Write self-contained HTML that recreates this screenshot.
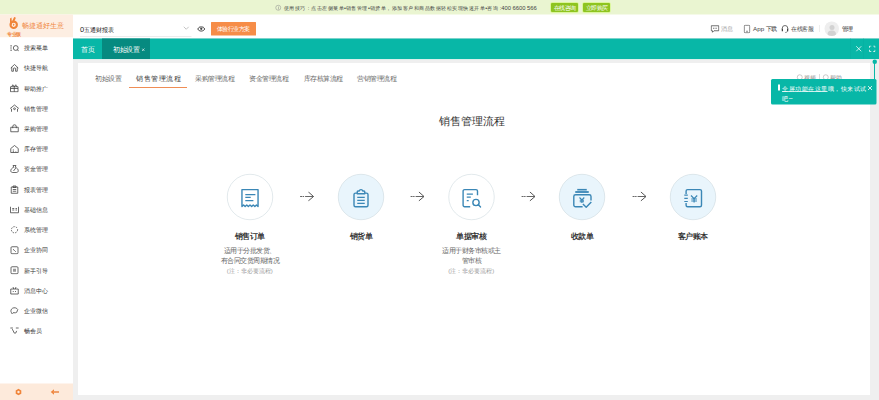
<!DOCTYPE html>
<html><head><meta charset="utf-8">
<style>
html,body{margin:0;padding:0;width:879px;height:400px;overflow:hidden;background:#efefef;}
*{box-sizing:border-box;}
#root{position:absolute;left:0;top:0;width:1758px;height:800px;transform:scale(0.5);transform-origin:0 0;font-family:"Liberation Sans",sans-serif;color:#333;overflow:hidden;}
.a{position:absolute;white-space:nowrap;}
.z{font-size:1.333em;letter-spacing:0em;-webkit-text-stroke:0.025em currentColor;}
u .z, .z u{text-decoration:underline;}
.p{color:transparent;-webkit-text-stroke:0;}
.cjk .z{font-size:1em;letter-spacing:0;-webkit-text-stroke:0;}
.cjk .p{color:inherit;}
</style></head>
<body>
<div id="root">
<div class="a" style="left:0.0px;top:0.0px;width:1758.0px;height:800.0px;background:#efefef;"></div>
<div class="a" style="left:0.0px;top:0.0px;width:1758.0px;height:29.5px;background:#eaf5d1;"></div>
<div class="a" style="left:551px;top:9.5px;width:11px;height:11px;border:1.2px solid #888;border-radius:50%;"></div>
<div class="a" style="left:556.0px;top:14.0px;width:1.2px;height:4.5px;background:#888;"></div>
<div class="a" style="left:556.0px;top:11.8px;width:1.2px;height:1.2px;background:#888;"></div>
<div class="a" style="left:567.0px;top:7.4px;font-size:10.7px;line-height:17.12px;color:#444;"><span class="z">使用技巧</span><span class="z p">：</span><span class="z">点击左侧菜单</span>•<span class="z">销售管理</span>•<span class="z">销货单</span><span class="z p">，</span><span class="z">添加客户和商品数据轻松实现快速开单</span>•<span class="z">咨询</span><span class="z p">：</span><span style="font-size:11.7px;margin-left:-5px;">400 6600 566</span></div>
<div class="a" style="left:1102.0px;top:6.0px;width:54.0px;height:18.0px;background:#8ec420;border-radius:2px;box-shadow:0 0 0 1.5px #d6f68c;"></div>
<div class="a" style="left:1102.0px;width:54px;text-align:center;top:7.2px;font-size:11px;line-height:17.6px;color:#fff;"><span class="z">在线咨询</span></div>
<div class="a" style="left:1166.0px;top:6.0px;width:54.0px;height:18.0px;background:#8ec420;border-radius:2px;box-shadow:0 0 0 1.5px #d6f68c;"></div>
<div class="a" style="left:1166.0px;width:54px;text-align:center;top:7.2px;font-size:11px;line-height:17.6px;color:#fff;"><span class="z">立即购买</span></div>
<div class="a" style="left:0.0px;top:29.0px;width:1758.0px;height:47.0px;background:#fff;"></div>
<div class="a" style="left:0.0px;top:29.0px;width:146.0px;height:46.0px;background:#fdeee2;"></div>
<svg class="a" style="left:18.0px;top:33.0px;" width="20" height="26" viewBox="0 0 20 26"><path d="M2 4 L5 2 L6.2 16 L2 17 Z" fill="#f0853a"/><path d="M8.5 9.5 L11.5 3" stroke="#f0853a" stroke-width="3.8" stroke-linecap="round"/><circle cx="9.4" cy="16.6" r="6.4" fill="none" stroke="#f0853a" stroke-width="4.2"/><path d="M8 14 L11.5 16.6 L8 19.2Z" fill="#f0853a"/></svg>
<div class="a" style="left:44.0px;top:40.0px;font-size:14px;line-height:22.4px;color:#f0853a;"><span class="z">畅捷通好生意</span></div>
<div class="a" style="left:14.8px;top:61.2px;font-size:9px;line-height:14.4px;color:#f0853a;font-weight:bold;"><span class="z">专业版</span></div>
<div class="a" style="left:160.0px;top:50.0px;font-size:11.5px;line-height:18.4px;color:#222;"><span style="font-size:15px">0</span><span class="z">五通财报表</span></div>
<div class="a" style="left:160.0px;top:72.0px;width:223.0px;height:1.0px;background:#d9d9d9;"></div>
<svg class="a" style="left:366.0px;top:52.0px;" width="13" height="8" viewBox="0 0 13 8"><path d="M1.5 1.5 L6.5 6.5 L11.5 1.5" fill="none" stroke="#aaa" stroke-width="1.4"/></svg>
<svg class="a" style="left:393.5px;top:49.5px;" width="17" height="15" viewBox="0 0 17 15"><path d="M1.5 8 C4 2.5 13 2.5 15.5 8 C13 13.5 4 13.5 1.5 8 Z" fill="none" stroke="#444" stroke-width="2"/><circle cx="8.5" cy="7.6" r="2.3" fill="#444"/><path d="M4 3.8 H13" stroke="#999" stroke-width="1.5"/></svg>
<div class="a" style="left:421.5px;top:44.0px;width:90.0px;height:27.0px;background:#f68d48;border-radius:1px;"></div>
<div class="a" style="left:421.0px;width:91px;text-align:center;top:49.0px;font-size:11.2px;line-height:17.92px;color:#fff;"><span class="z">体验行业方案</span></div>
<svg class="a" style="left:1421.0px;top:50.0px;" width="18" height="17" viewBox="0 0 18 17"><path d="M1.5 1.5 H16.5 V11.5 H7 L4 14.5 V11.5 H1.5 Z" fill="none" stroke="#444" stroke-width="1.5" stroke-linejoin="round"/><path d="M5 6.5 H13" stroke="#444" stroke-width="1.5" stroke-dasharray="2 1.2"/></svg>
<div class="a" style="left:1442.0px;top:49.2px;font-size:11px;line-height:17.6px;color:#999;"><span class="z">消息</span></div>
<svg class="a" style="left:1487.0px;top:49.0px;" width="14" height="18" viewBox="0 0 14 18"><rect x="1.5" y="1.5" width="11" height="15" rx="2" fill="none" stroke="#555" stroke-width="1.5"/><path d="M5 13.5 H9" stroke="#555" stroke-width="1.3"/></svg>
<div class="a" style="left:1506.0px;top:49.2px;font-size:11px;line-height:17.6px;color:#444;"><span style="font-size:12.5px">App</span> <span class="z">下载</span></div>
<svg class="a" style="left:1562.0px;top:49.0px;" width="16" height="17" viewBox="0 0 16 17"><path d="M2.5 10 V7.5 A5.5 5.5 0 0 1 13.5 7.5 V10" fill="none" stroke="#444" stroke-width="1.5"/><rect x="1.5" y="8.5" width="2.5" height="5" fill="#444"/><rect x="12" y="8.5" width="2.5" height="5" fill="#444"/><path d="M13 13.5 Q12 16 8.5 16" fill="none" stroke="#444" stroke-width="1.3"/></svg>
<div class="a" style="left:1582.0px;top:49.2px;font-size:11px;line-height:17.6px;color:#444;"><span class="z">在线客服</span></div>
<div class="a" style="left:1638.5px;top:50.0px;width:1.0px;height:14.0px;background:#ddd;"></div>
<div class="a" style="left:1649px;top:43px;width:29px;height:29px;border-radius:50%;background:#eeeeee;overflow:hidden;"><div class="a" style="left:9.5px;top:7px;width:10px;height:10px;border-radius:50%;background:#d2d2d2;"></div><div class="a" style="left:6px;top:18px;width:17px;height:14px;border-radius:8px 8px 0 0;background:#d2d2d2;"></div></div>
<div class="a" style="left:1683.0px;top:49.2px;font-size:11px;line-height:17.6px;color:#222;"><span class="z">管理</span></div>
<div class="a" style="left:0.0px;top:75.0px;width:146.0px;height:725.0px;background:#fff;"></div>
<svg class="a" style="left:20.0px;top:86.6px;" width="18" height="18" viewBox="0 0 18 18"><path d="M0.5 4.8 H4 M0.5 9 H3.5 M0.5 13.4 H4" fill="none" stroke="#3a3a3a" stroke-width="1.5"/><circle cx="11.5" cy="9" r="4.8" fill="none" stroke="#3a3a3a" stroke-width="1.5"/><path d="M14.8 12.4 L17.4 15.4" fill="none" stroke="#3a3a3a" stroke-width="1.5"/></svg>
<div class="a" style="left:47.0px;top:86.8px;font-size:12.2px;line-height:19.52px;color:#333;"><span class="z">搜索菜单</span></div>
<svg class="a" style="left:20.0px;top:127.0px;" width="18" height="18" viewBox="0 0 18 18"><path d="M1.5 9 L9 2 L16.5 9 M3.5 7.2 V15.5 H6.8 V11 A2.2 2.2 0 0 1 11.2 11 V15.5 H14.5 V7.2" fill="none" stroke="#3a3a3a" stroke-width="1.5" stroke-linejoin="round"/></svg>
<div class="a" style="left:47.0px;top:127.3px;font-size:12.2px;line-height:19.52px;color:#333;"><span class="z">快捷导航</span></div>
<svg class="a" style="left:20.0px;top:167.4px;" width="18" height="18" viewBox="0 0 18 18"><path d="M1 6.5 H16 V16.5 H1 Z M1 10 H16 M8.5 6.5 V16.5 M3.5 6.5 L5.5 2.5 L8.5 6.5 L11.5 2.5 L13.5 6.5" fill="none" stroke="#3a3a3a" stroke-width="1.5"/></svg>
<div class="a" style="left:47.0px;top:167.7px;font-size:12.2px;line-height:19.52px;color:#333;"><span class="z">帮助推广</span></div>
<svg class="a" style="left:20.0px;top:207.9px;" width="18" height="18" viewBox="0 0 18 18"><path d="M3 15.5 V10 L1 8.5 L9 2 L17 8.5 L15 10 V15.5" fill="none" stroke="#3a3a3a" stroke-width="1.5" stroke-linejoin="round"/><circle cx="9" cy="9.5" r="1.8" fill="none" stroke="#3a3a3a" stroke-width="1.5"/></svg>
<div class="a" style="left:47.0px;top:208.1px;font-size:12.2px;line-height:19.52px;color:#333;"><span class="z">销售管理</span></div>
<svg class="a" style="left:20.0px;top:248.3px;" width="18" height="18" viewBox="0 0 18 18"><path d="M1.5 6.5 H16.5 V15.5 H1.5 Z M5.5 8.5 V5 A3.5 3.5 0 0 1 12.5 5 V8.5" fill="none" stroke="#3a3a3a" stroke-width="1.5" stroke-linejoin="round"/></svg>
<div class="a" style="left:47.0px;top:248.5px;font-size:12.2px;line-height:19.52px;color:#333;"><span class="z">采购管理</span></div>
<svg class="a" style="left:20.0px;top:288.7px;" width="18" height="18" viewBox="0 0 18 18"><path d="M1.5 8 L9 2 L16.5 8 V16 H1.5 Z M5.5 11 H8 M5.5 14.5 H8 M11 14.5 H12.5" fill="none" stroke="#3a3a3a" stroke-width="1.5" stroke-linejoin="round"/></svg>
<div class="a" style="left:47.0px;top:288.9px;font-size:12.2px;line-height:19.52px;color:#333;"><span class="z">库存管理</span></div>
<svg class="a" style="left:20.0px;top:329.1px;" width="18" height="18" viewBox="0 0 18 18"><path d="M6 2 H12 L10.5 5.5 C14.5 7 16.5 10 16.5 12.5 C16.5 15 14.5 16 12.5 16 H5.5 C3.5 16 1.5 15 1.5 12.5 C1.5 10 3.5 7 7.5 5.5 Z M11.5 7 L7 13" fill="none" stroke="#3a3a3a" stroke-width="1.5" stroke-linejoin="round"/></svg>
<div class="a" style="left:47.0px;top:329.4px;font-size:12.2px;line-height:19.52px;color:#333;"><span class="z">资金管理</span></div>
<svg class="a" style="left:20.0px;top:369.5px;" width="18" height="18" viewBox="0 0 18 18"><path d="M2.5 4 H15.5 V16.5 H2.5 Z M6 2 H12 V5 H6 Z M5.5 9 H12.5 M5.5 12.5 H12.5" fill="none" stroke="#3a3a3a" stroke-width="1.5"/></svg>
<div class="a" style="left:47.0px;top:369.8px;font-size:12.2px;line-height:19.52px;color:#333;"><span class="z">报表管理</span></div>
<svg class="a" style="left:20.0px;top:410.0px;" width="18" height="18" viewBox="0 0 18 18"><path d="M1 3.5 V15.5 H17 V3.5 M4.5 7 H8.5 M4.5 10 H8.5 M11 7 H14 M11 10 H14" fill="none" stroke="#3a3a3a" stroke-width="1.5"/></svg>
<div class="a" style="left:47.0px;top:410.2px;font-size:12.2px;line-height:19.52px;color:#333;"><span class="z">基础信息</span></div>
<svg class="a" style="left:20.0px;top:450.4px;" width="18" height="18" viewBox="0 0 18 18"><circle cx="9" cy="9.5" r="6.2" fill="none" stroke="#3a3a3a" stroke-width="1.5" stroke-dasharray="3 2.2"/></svg>
<div class="a" style="left:47.0px;top:450.6px;font-size:12.2px;line-height:19.52px;color:#333;"><span class="z">系统管理</span></div>
<svg class="a" style="left:20.0px;top:490.8px;" width="18" height="18" viewBox="0 0 18 18"><rect x="2" y="2.5" width="14" height="14" rx="2" fill="none" stroke="#3a3a3a" stroke-width="1.5"/><path d="M6 7.5 L9 10 L11.5 12.5" fill="none" stroke="#3a3a3a" stroke-width="1.5"/></svg>
<div class="a" style="left:47.0px;top:491.0px;font-size:12.2px;line-height:19.52px;color:#333;"><span class="z">企业协同</span></div>
<svg class="a" style="left:20.0px;top:531.2px;" width="18" height="18" viewBox="0 0 18 18"><rect x="2" y="2.5" width="14" height="14" rx="2" fill="none" stroke="#3a3a3a" stroke-width="1.5"/><rect x="6" y="6.5" width="6" height="6" fill="#999"/></svg>
<div class="a" style="left:47.0px;top:531.5px;font-size:12.2px;line-height:19.52px;color:#333;"><span class="z">新手引导</span></div>
<svg class="a" style="left:20.0px;top:571.6px;" width="18" height="18" viewBox="0 0 18 18"><path d="M1.5 6 H16.5 V16 H1.5 Z M6 2 L7.5 6 M12 2 L10.5 6 M6.5 10 V12 M11 10 V12" fill="none" stroke="#3a3a3a" stroke-width="1.5"/></svg>
<div class="a" style="left:47.0px;top:571.9px;font-size:12.2px;line-height:19.52px;color:#333;"><span class="z">消息中心</span></div>
<svg class="a" style="left:20.0px;top:612.1px;" width="18" height="18" viewBox="0 0 18 18"><path d="M3 13.5 C1 11 1.5 6.5 5 4.5 C8.5 2.5 13.5 3.5 15.5 7 L13.5 12.5 L11 13.5 L6 13.5 L4 15.5 Z" fill="none" stroke="#3a3a3a" stroke-width="1.5" stroke-linejoin="round"/></svg>
<div class="a" style="left:47.0px;top:612.3px;font-size:12.2px;line-height:19.52px;color:#333;"><span class="z">企业微信</span></div>
<svg class="a" style="left:20.0px;top:652.5px;" width="18" height="18" viewBox="0 0 18 18"><path d="M1.5 3 H5 M12.5 3 H16.5 M5 6 L8.5 13 A2 2 0 0 0 11.5 13 L13 9.5" fill="none" stroke="#3a3a3a" stroke-width="1.5" stroke-width="2.2" stroke-linecap="round"/></svg>
<div class="a" style="left:47.0px;top:652.7px;font-size:12.2px;line-height:19.52px;color:#333;"><span class="z">畅会员</span></div>
<div class="a" style="left:0.0px;top:767.0px;width:146.0px;height:33.0px;background:#fdeadb;"></div>
<svg class="a" style="left:28.5px;top:775.5px;" width="16" height="16" viewBox="0 0 16 16"><path d="M8 1.5 L13.6 4.75 V11.25 L8 14.5 L2.4 11.25 V4.75 Z M8 5.6 A2.4 2.4 0 1 0 8 10.4 A2.4 2.4 0 1 0 8 5.6 Z" fill="#f0853a" fill-rule="evenodd"/></svg>
<svg class="a" style="left:100.0px;top:776.0px;" width="20" height="16" viewBox="0 0 20 16"><path d="M1.5 8 L8 2.5 V13.5 Z" fill="#f0853a"/><rect x="7" y="6" width="11" height="4" fill="#f0a06a"/></svg>
<div class="a" style="left:146.0px;top:76.6px;width:1612.0px;height:41.0px;background:#08b7a7;"></div>
<div class="a" style="left:146.0px;top:117.6px;width:1612.0px;height:1.4px;background:#c9efe9;"></div>
<div class="a" style="left:204.4px;top:76.6px;width:95.2px;height:41.0px;background:#068a80;"></div>
<div class="a" style="left:162.0px;top:89.1px;font-size:13px;line-height:20.8px;color:#fff;"><span class="z">首页</span></div>
<div class="a" style="left:226.0px;top:89.1px;font-size:13px;line-height:20.8px;color:#fff;"><span class="z">初始设置</span></div>
<svg class="a" style="left:283.0px;top:95.5px;" width="7" height="7" viewBox="0 0 7 7"><path d="M1 1 L6 6 M6 1 L1 6" stroke="#fff" stroke-width="1.2"/></svg>
<div class="a" style="left:1700.5px;top:76.6px;width:1.0px;height:41.0px;background:#07ad9e;"></div>
<div class="a" style="left:1727.0px;top:76.6px;width:1.0px;height:41.0px;background:#07ad9e;"></div>
<svg class="a" style="left:1710.5px;top:90.5px;" width="13" height="13" viewBox="0 0 13 13"><path d="M1.5 1.5 L11.5 11.5 M11.5 1.5 L1.5 11.5" stroke="#fff" stroke-width="1.5"/></svg>
<svg class="a" style="left:1737.5px;top:90.5px;" width="13" height="13" viewBox="0 0 13 13"><path d="M1 4.5 V1 H4.5 M8.5 1 H12 V4.5 M12 8.5 V12 H8.5 M4.5 12 H1 V8.5" fill="none" stroke="#fff" stroke-width="1.5"/></svg>
<div class="a" style="left:156.0px;top:126.0px;width:1584.0px;height:664.0px;background:#fff;"></div>
<div class="a" style="left:190.0px;top:147.6px;font-size:13px;line-height:20.8px;color:#666;"><span class="z">初始设置</span></div>
<div class="a" style="left:272.0px;top:146.4px;font-size:14.5px;line-height:23.2px;color:#333;"><span class="z">销售管理流程</span></div>
<div class="a" style="left:390.6px;top:147.6px;font-size:13px;line-height:20.8px;color:#666;"><span class="z">采购管理流程</span></div>
<div class="a" style="left:498.4px;top:147.6px;font-size:13px;line-height:20.8px;color:#666;"><span class="z">资金管理流程</span></div>
<div class="a" style="left:607.0px;top:147.6px;font-size:13px;line-height:20.8px;color:#666;"><span class="z">库存核算流程</span></div>
<div class="a" style="left:714.4px;top:147.6px;font-size:13px;line-height:20.8px;color:#666;"><span class="z">营销管理流程</span></div>
<div class="a" style="left:257.8px;top:174.0px;width:116.6px;height:2.0px;background:#ef8d55;"></div>
<div class="a" style="left:1594px;top:149px;width:11px;height:11px;border:1.3px solid #999;border-radius:50%;"></div>
<div class="a" style="left:1608.0px;top:147.2px;font-size:11px;line-height:17.6px;color:#888;"><span class="z">视频</span></div>
<div class="a" style="left:1638.0px;top:148.0px;width:1.0px;height:14.0px;background:#bbb;"></div>
<div class="a" style="left:1646px;top:149px;width:11px;height:11px;border:1.3px solid #999;border-radius:50%;"></div>
<div class="a" style="left:1660.0px;top:147.2px;font-size:11px;line-height:17.6px;color:#888;"><span class="z">帮助</span></div>
<div class="a" style="left:793.6px;width:300px;text-align:center;top:224.1px;font-size:22px;line-height:35.2px;color:#333;"><span class="z">销售管理流程</span></div>
<div class="a" style="left:453.6px;top:347.6px;width:92px;height:92px;border-radius:50%;border:1px solid #c4d3d9;background:#fff;"></div>
<svg class="a" style="left:479.6px;top:374.0px;" width="40" height="44" viewBox="0 0 40 44"><path d="M3.9 39 V5.2 H36.1 V39 L32.9 36 L29.7 39 L26.5 36 L23.3 39 L20 36 L16.7 39 L13.5 36 L10.3 39 L7.1 36 Z" fill="none" stroke="#3b87b6" stroke-width="2.8" stroke-linejoin="round"/><path d="M10.6 15.2 H30.8 M10.6 20.8 H21.4 M10.6 27.4 H26.8" fill="none" stroke="#3b87b6" stroke-width="2.4"/></svg>
<div class="a" style="left:399.6px;width:200px;text-align:center;top:460.5px;font-size:15px;line-height:24.0px;color:#333;font-weight:bold;"><span class="z">销售订单</span></div>
<div class="a" style="left:399.6px;width:200px;text-align:center;top:491.4px;font-size:13px;line-height:20.8px;color:#666;"><span class="z">适用于分批发货</span><span class="z p">、</span></div>
<div class="a" style="left:399.6px;width:200px;text-align:center;top:511.4px;font-size:13px;line-height:20.8px;color:#666;"><span class="z">有合同交货周期情况</span></div>
<div class="a" style="left:399.6px;width:200px;text-align:center;top:533.4px;font-size:12px;line-height:19.2px;color:#999;">(<span class="z">注</span><span class="z p">：</span><span class="z">非必要流程</span>)</div>
<div class="a" style="left:675.8px;top:347.6px;width:92px;height:92px;border-radius:50%;border:1px solid #c4d3d9;background:#e9f5fc;"></div>
<svg class="a" style="left:701.8px;top:374.0px;" width="40" height="44" viewBox="0 0 40 44"><path d="M12.5 12.2 H9 A3 3 0 0 0 6 15.2 V36.4 A3 3 0 0 0 9 39.4 H31 A3 3 0 0 0 34 36.4 V15.2 A3 3 0 0 0 31 12.2 H27.5" fill="none" stroke="#3b87b6" stroke-width="2.8" stroke-linejoin="round"/><path d="M12.5 13.4 V9.6 Q12.5 8 14 8 H16.5 Q17 5.2 20 5.2 Q23 5.2 23.5 8 H26 Q27.5 8 27.5 9.6 V13.4 Z" fill="none" stroke="#3b87b6" stroke-width="2.8" stroke-linejoin="round"/><path d="M12.5 20.6 H27.5 M12.5 26.8 H27.5 M12.5 32.6 H27.5" fill="none" stroke="#3b87b6" stroke-width="2.4"/></svg>
<div class="a" style="left:621.8px;width:200px;text-align:center;top:460.5px;font-size:15px;line-height:24.0px;color:#333;font-weight:bold;"><span class="z">销货单</span></div>
<div class="a" style="left:896.6px;top:347.6px;width:92px;height:92px;border-radius:50%;border:1px solid #c4d3d9;background:#fff;"></div>
<svg class="a" style="left:922.6px;top:374.0px;" width="40" height="44" viewBox="0 0 40 44"><path d="M32 16.4 V8.2 A3 3 0 0 0 29 5.2 H6.2 A3 3 0 0 0 3.2 8.2 V36.4 A3 3 0 0 0 6.2 39.4 H17.4" fill="none" stroke="#3b87b6" stroke-width="2.8" stroke-linejoin="round"/><path d="M10.5 14.2 H22.8 M10.5 20.4 H18.6 M10.5 27.4 H14.4" fill="none" stroke="#3b87b6" stroke-width="2.4"/><circle cx="29" cy="31" r="6.3" fill="none" stroke="#3b87b6" stroke-width="2.8" stroke-linejoin="round"/><path d="M33.6 35.6 L38.2 40.2" fill="none" stroke="#3b87b6" stroke-width="2.8" stroke-linejoin="round" stroke-linecap="round"/></svg>
<div class="a" style="left:842.6px;width:200px;text-align:center;top:460.5px;font-size:15px;line-height:24.0px;color:#333;font-weight:bold;"><span class="z">单据审核</span></div>
<div class="a" style="left:842.6px;width:200px;text-align:center;top:491.4px;font-size:13px;line-height:20.8px;color:#666;"><span class="z">适用于财务审核或主</span></div>
<div class="a" style="left:842.6px;width:200px;text-align:center;top:511.4px;font-size:13px;line-height:20.8px;color:#666;"><span class="z">管审核</span></div>
<div class="a" style="left:842.6px;width:200px;text-align:center;top:533.4px;font-size:12px;line-height:19.2px;color:#999;">(<span class="z">注</span><span class="z p">：</span><span class="z">非必要流程</span>)</div>
<div class="a" style="left:1118.2px;top:347.6px;width:92px;height:92px;border-radius:50%;border:1px solid #c4d3d9;background:#e9f5fc;"></div>
<svg class="a" style="left:1144.2px;top:374.0px;" width="40" height="44" viewBox="0 0 40 44"><rect x="10.5" y="3.8" width="19" height="3.2" fill="#3b87b6"/><rect x="6.5" y="8.2" width="27" height="3.6" fill="#3b87b6"/><path d="M21.2 39.4 H7.1 A3.5 3.5 0 0 1 3.6 35.9 V19.1 A3.5 3.5 0 0 1 7.1 15.6 H34.5 A3.5 3.5 0 0 1 38 19.1 V26.8" fill="none" stroke="#3b87b6" stroke-width="2.8" stroke-linejoin="round"/><path d="M21.8 34 L28.4 40.4 L38.6 30" fill="none" stroke="#3b87b6" stroke-width="2.8" stroke-linejoin="round"/><path d="M15 21 L19.8 26 L24.6 21 M19.8 26 V32 M15.5 26.5 H24 M15.5 29.5 H24" fill="none" stroke="#3b87b6" stroke-width="2.2"/></svg>
<div class="a" style="left:1064.2px;width:200px;text-align:center;top:460.5px;font-size:15px;line-height:24.0px;color:#333;font-weight:bold;"><span class="z">收款单</span></div>
<div class="a" style="left:1339.8px;top:347.6px;width:92px;height:92px;border-radius:50%;border:1px solid #c4d3d9;background:#e9f5fc;"></div>
<svg class="a" style="left:1365.8px;top:374.0px;" width="40" height="44" viewBox="0 0 40 44"><path d="M6.2 14 V8.2 A3 3 0 0 1 9.2 5.2 H34 A3 3 0 0 1 37 8.2 V36.4 A3 3 0 0 1 34 39.4 H9.2 A3 3 0 0 1 6.2 36.4 V32" fill="none" stroke="#3b87b6" stroke-width="2.8" stroke-linejoin="round"/><path d="M2.6 16.4 H9.6 M2.6 22.6 H9.6 M2.6 29 H9.6" fill="none" stroke="#3b87b6" stroke-width="2.4"/><path d="M16 17 L22.2 23.5 L28.4 17 M22.2 23.5 V31 M16.5 24 H28 M16.5 28 H28" fill="none" stroke="#3b87b6" stroke-width="2.4"/></svg>
<div class="a" style="left:1285.8px;width:200px;text-align:center;top:460.5px;font-size:15px;line-height:24.0px;color:#333;font-weight:bold;"><span class="z">客户账本</span></div>
<svg class="a" style="left:597.7px;top:383.0px;" width="32" height="20" viewBox="0 0 32 20"><path d="M2.2 10 H6.2 M7.2 10 H10.2 M12.2 10 H29" stroke="#555" stroke-width="1.8"/><path d="M18.7 0.8 L29 10 L18.7 18.8" fill="none" stroke="#555" stroke-width="2"/></svg>
<svg class="a" style="left:819.2px;top:383.0px;" width="32" height="20" viewBox="0 0 32 20"><path d="M2.2 10 H6.2 M7.2 10 H10.2 M12.2 10 H29" stroke="#555" stroke-width="1.8"/><path d="M18.7 0.8 L29 10 L18.7 18.8" fill="none" stroke="#555" stroke-width="2"/></svg>
<svg class="a" style="left:1041.0px;top:383.0px;" width="32" height="20" viewBox="0 0 32 20"><path d="M2.2 10 H6.2 M7.2 10 H10.2 M12.2 10 H29" stroke="#555" stroke-width="1.8"/><path d="M18.7 0.8 L29 10 L18.7 18.8" fill="none" stroke="#555" stroke-width="2"/></svg>
<svg class="a" style="left:1262.8px;top:383.0px;" width="32" height="20" viewBox="0 0 32 20"><path d="M2.2 10 H6.2 M7.2 10 H10.2 M12.2 10 H29" stroke="#555" stroke-width="1.8"/><path d="M18.7 0.8 L29 10 L18.7 18.8" fill="none" stroke="#555" stroke-width="2"/></svg>
<div class="a" style="left:1748.0px;top:123.0px;width:2.0px;height:36.0px;background:#08b7a7;"></div>
<div class="a" style="left:1744.5px;top:119px;width:9px;height:9px;border-radius:50%;background:#08b7a7;"></div>
<div class="a" style="left:1541.6px;top:158.4px;width:211.0px;height:51.0px;background:#08b7a7;border-radius:3px;"></div>
<div class="a" style="left:1556.0px;top:169.0px;width:3.5px;height:12.0px;background:#fff;"></div>
<div class="a" style="left:1564.0px;top:167.6px;font-size:12.8px;line-height:20.48px;color:#fff;"><u><span class="z">全屏功能在这里</span></u><span class="z">哦</span><span class="z p">，</span><span class="z">快来试试</span></div>
<div class="a" style="left:1564.0px;top:186.8px;font-size:12.8px;line-height:20.48px;color:#fff;"><span class="z">吧</span><span style="font-size:15px">~</span></div>
<svg class="a" style="left:1735.0px;top:171.0px;" width="10" height="10" viewBox="0 0 10 10"><path d="M1 1 L9 9 M9 1 L1 9" stroke="#fff" stroke-width="1.6"/></svg>
</div>
<script>(function(){try{var s=document.createElement('span');s.style.cssText='position:absolute;left:0;top:0;font-size:100px;font-family:"Liberation Sans";white-space:nowrap;visibility:hidden;';s.textContent='销售管理';document.body.appendChild(s);var w=s.getBoundingClientRect().width;document.body.removeChild(s);if(w>350){document.documentElement.className+=' cjk';}}catch(e){}})();</script>
</body></html>
